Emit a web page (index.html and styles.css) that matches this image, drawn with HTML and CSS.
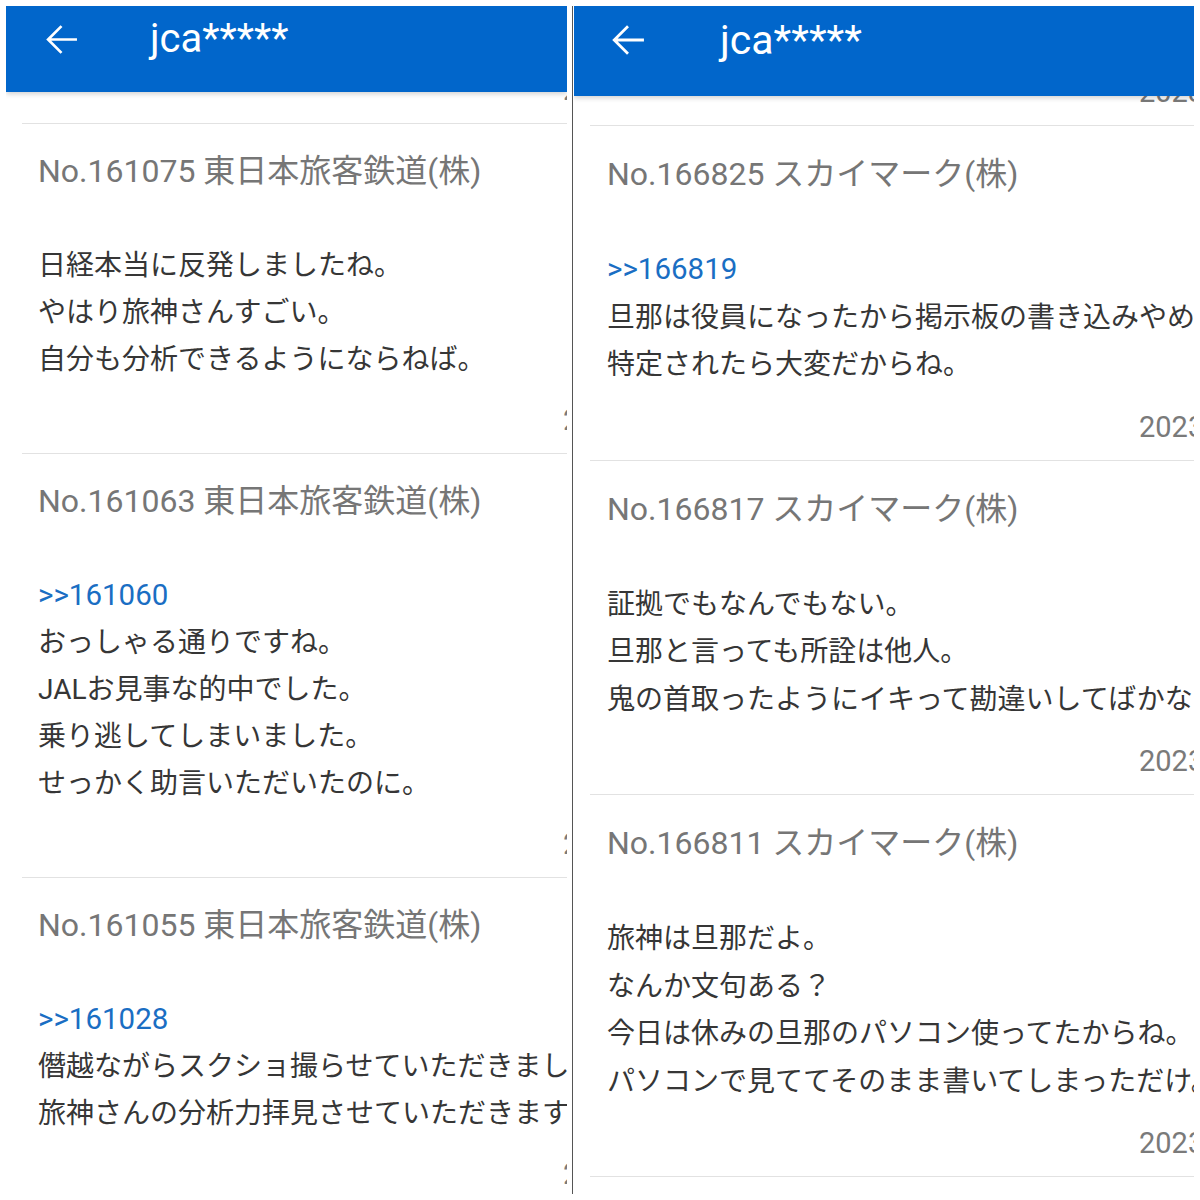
FILE: index.html
```html
<!DOCTYPE html>
<html lang="ja">
<head>
<meta charset="utf-8">
<title>jca*****</title>
<link rel="stylesheet" href="styles.css">
</head>
<body>
<div class="sheet">
  <section class="panel panel-left">
    <header class="appbar">
      <div class="appbar-row">
        <svg class="back" viewBox="0 0 32 30" width="33" height="31" aria-hidden="true"><path d="M31 15H3M16 2L3 15L16 28" fill="none" stroke="#fff" stroke-width="2.6"/></svg>
        <h1 class="appbar-title">jca*****</h1>
      </div>
    </header>
    <div class="feed">
      <div class="tail"><div class="date">2023/01/16 15:02</div></div>
      <article class="post">
        <h2 class="post-title">No.161075 東日本旅客鉄道(株)</h2>
        <div class="post-body">
          <p class="line">日経本当に反発しましたね。</p>
          <p class="line">やはり旅神さんすごい。</p>
          <p class="line">自分も分析できるようにならねば。</p>
        </div>
        <div class="date">2023/01/16 14:48</div>
      </article>
      <article class="post">
        <h2 class="post-title">No.161063 東日本旅客鉄道(株)</h2>
        <div class="post-body">
          <p class="line link">&gt;&gt;161060</p>
          <p class="line">おっしゃる通りですね。</p>
          <p class="line">JALお見事な的中でした。</p>
          <p class="line">乗り逃してしまいました。</p>
          <p class="line">せっかく助言いただいたのに。</p>
        </div>
        <div class="date">2023/01/16 14:31</div>
      </article>
      <article class="post">
        <h2 class="post-title">No.161055 東日本旅客鉄道(株)</h2>
        <div class="post-body">
          <p class="line link">&gt;&gt;161028</p>
          <p class="line">僭越ながらスクショ撮らせていただきました。</p>
          <p class="line">旅神さんの分析力拝見させていただきます。</p>
        </div>
        <div class="date">2023/01/16 14:20</div>
      </article>
    </div>
  </section>

  <div class="rule"></div>

  <section class="panel panel-right">
    <header class="appbar">
      <div class="appbar-row">
        <svg class="back" viewBox="0 0 32 30" width="34" height="32" aria-hidden="true"><path d="M31 15H3M16 2L3 15L16 28" fill="none" stroke="#fff" stroke-width="2.6"/></svg>
        <h1 class="appbar-title">jca*****</h1>
      </div>
    </header>
    <div class="feed">
      <div class="tail"><div class="date">2023/02/03 18:12</div></div>
      <article class="post">
        <h2 class="post-title">No.166825 スカイマーク(株)</h2>
        <div class="post-body">
          <p class="line link">&gt;&gt;166819</p>
          <p class="line">旦那は役員になったから掲示板の書き込みやめたよ。</p>
          <p class="line">特定されたら大変だからね。</p>
        </div>
        <div class="date">2023/02/03 17:58</div>
      </article>
      <article class="post">
        <h2 class="post-title">No.166817 スカイマーク(株)</h2>
        <div class="post-body">
          <p class="line">証拠でもなんでもない。</p>
          <p class="line">旦那と言っても所詮は他人。</p>
          <p class="line">鬼の首取ったようにイキって勘違いしてばかなの？</p>
        </div>
        <div class="date">2023/02/03 17:40</div>
      </article>
      <article class="post">
        <h2 class="post-title">No.166811 スカイマーク(株)</h2>
        <div class="post-body">
          <p class="line">旅神は旦那だよ。</p>
          <p class="line">なんか文句ある？</p>
          <p class="line">今日は休みの旦那のパソコン使ってたからね。</p>
          <p class="line">パソコンで見ててそのまま書いてしまっただけ。</p>
        </div>
        <div class="date">2023/02/03 17:21</div>
      </article>
      <div class="post post-next"></div>
    </div>
  </section>
</div>
</body>
</html>
```

FILE: styles.css
```css
html, body {
  margin: 0;
  padding: 0;
  background: #ffffff;
}

body {
  font-family: Roboto, "Noto Sans CJK JP", "Noto Sans", sans-serif;
}

.sheet {
  display: flex;
  align-items: stretch;
  padding: 6px;
  height: 1188px;
}

.panel {
  height: 1188px;
  overflow: hidden;
  display: flex;
  flex-direction: column;
  background: #ffffff;
}

.panel-left {
  width: 561px;
  flex: none;
}

.rule {
  flex: none;
  width: 1px;
  margin: 0 1px 0 5px;
  background: #555555;
}

.panel-right {
  width: 620px;
  flex: none;
}

/* App bar */
.appbar {
  flex: none;
  position: relative;
  z-index: 1;
  background: #0166cb;
  box-sizing: border-box;
  box-shadow: 0 2px 5px rgba(0, 0, 0, 0.18);
}

.panel-left .appbar {
  height: 86px;
  padding: 9px 0 0 39px;
}

.panel-right .appbar {
  height: 90px;
  padding: 10px 0 0 37px;
}

.appbar-row {
  display: flex;
  align-items: center;
  height: 48px;
}

.back {
  flex: none;
  display: block;
}

.appbar-title {
  margin: 0;
  color: #ffffff;
  font-family: Roboto, sans-serif;
  font-weight: 400;
  font-size: 40px;
  line-height: 48px;
  white-space: nowrap;
}

.panel-left .appbar-title {
  margin-left: 72px;
}

.panel-right .appbar-title {
  margin-left: 75px;
  font-size: 41px;
}

/* Feed */
.feed {
  flex: 1;
  min-height: 0;
}

.tail {
  overflow: hidden;
}

.panel-left .tail {
  height: 31px;
  padding-left: 32px;
}

.panel-left .tail .date {
  margin-top: -22px;
}

.panel-right .tail {
  height: 29px;
  padding-left: 33px;
}

.panel-right .tail .date {
  margin-top: -24px;
}

.post {
  margin-left: 16px;
  border-top: 1px solid #e2e2e2;
  white-space: nowrap;
}

.panel-left .post {
  padding: 27px 0 13px 16px;
}

.panel-right .post {
  padding: 28px 0 13px 17px;
}

.post-next {
  height: 40px;
}

.post-title {
  margin: 0;
  font-weight: 400;
  font-size: 32px;
  line-height: 40px;
  color: #767676;
  white-space: nowrap;
}

.post-body {
  margin-top: 51px;
}

.panel-right .post-body {
  margin-top: 52px;
}

.line {
  margin: 0;
  font-size: 28px;
  line-height: 47px;
  color: #363636;
  white-space: nowrap;
}

.panel-right .line {
  line-height: 47.5px;
}

.line.link {
  color: #1a6ec3;
  font-size: 29.5px;
}

.date {
  margin-top: 17px;
  font-size: 29px;
  line-height: 40px;
  color: #7a7a7a;
  white-space: nowrap;
}

.panel-left .date {
  padding-left: 525px;
}

.panel-right .date {
  padding-left: 532px;
}

.panel-right .post .date {
  margin-top: 18px;
}
```
